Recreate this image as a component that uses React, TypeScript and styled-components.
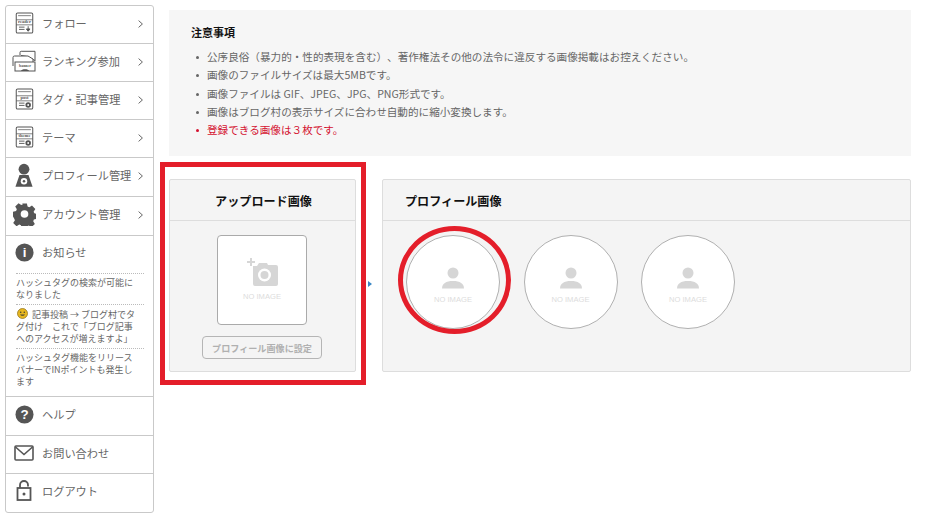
import React from "react";
import styled, { createGlobalStyle } from "styled-components";

const Global = createGlobalStyle`
  html, body { margin: 0; padding: 0; background: #fff; }
  body { font-family: "Noto Sans CJK JP", "Noto Sans", sans-serif; color: #555; width: 927px; height: 515px; overflow: hidden; text-spacing-trim: space-all; }
`;
const Page = styled.div`display: flex; align-items: flex-start; padding: 5px 0 0 5px; position: relative; width: 927px; height: 515px; box-sizing: border-box;`;
const Side = styled.nav`width: 149px; height: 508px; box-sizing: border-box; border: 1px solid #c9c9c9; border-radius: 3px; display: flex; flex-direction: column; flex: none;`;
const Row = styled.div<{ $h: number; $last?: boolean }>`
  height: ${p => p.$h}px; flex: none; box-sizing: border-box; display: flex; align-items: center; position: relative; padding-bottom: ${p => (p.$last ? 6 : 4)}px;
  border-bottom: ${p => (p.$last ? "none" : "1px solid #c9c9c9")};
`;
const IconSlot = styled.span`width: 36px; flex: none; display: flex; justify-content: center; align-items: center; height: 32px;`;
const Label = styled.span`font-size: 11.2px; color: #666; white-space: nowrap; line-height: 16px; flex: 1;`;
const Chev = styled.svg`flex: none; width: 5px; height: 8px; margin: 2px 10px 0 0; fill: none; stroke: #666; stroke-width: 1;`;
const NewsBox = styled.div`height: 161px; flex: none; box-sizing: border-box; border-bottom: 1px solid #c9c9c9; display: flex; flex-direction: column;`;
const NewsHead = styled.div`height: 37px; display: flex; align-items: center; flex: none; padding-bottom: 5px; box-sizing: border-box;`;
const NewsItem = styled.div`margin: 0 9px 0 10px; border-top: 1px dotted #bbb; font-size: 9px; line-height: 12px; color: #666; padding: 3px 4px 3px 0;`;
const Main = styled.main`margin-left: 15px; width: 742px; flex: none; padding-top: 5px;`;
const Notice = styled.section`background: #f6f6f6; height: 146px; box-sizing: border-box; padding: 13px 22px;`;
const NoticeTitle = styled.h2`margin: 0 0 7px; font-size: 11px; line-height: 18px; font-weight: 700; color: #111;`;
const NoticeList = styled.ul`margin: 0; padding: 0; list-style: none;`;
const NoticeItem = styled.li<{ $red?: boolean }>`
  font-size: 10.6px; line-height: 18.3px; color: ${p => (p.$red ? "#d4112f" : "#666")}; white-space: nowrap; padding-left: 16px; position: relative;
  &::before { content: ""; position: absolute; left: 5px; top: 8px; width: 3px; height: 3px; border-radius: 50%; background: ${p => (p.$red ? "#d4112f" : "#666")}; }
`;
const Panels = styled.div`display: flex; margin-top: 23px; align-items: stretch; height: 193px;`;
const Panel = styled.section<{ $w: number }>`width: ${p => p.$w}px; flex: none; box-sizing: border-box; background: #f4f4f4; border: 1px solid #ddd; border-radius: 2px; display: flex; flex-direction: column;`;
const PanelHead = styled.h3<{ $center?: boolean }>`
  margin: 0; height: 41px; flex: none; box-sizing: border-box; border-bottom: 1px solid #ddd; font-size: 12.1px; font-weight: 700; color: #111;
  display: flex; align-items: center; justify-content: ${p => (p.$center ? "center" : "flex-start")}; padding-left: ${p => (p.$center ? 2 : 22)}px;
`;
const UploadBody = styled.div`display: flex; flex-direction: column; align-items: center; padding: 14px 1px 0 0;`;
const UploadBox = styled.div`width: 90px; height: 90px; box-sizing: border-box; border: 1px solid #aaa; border-radius: 4px; background: #fff; display: flex; flex-direction: column; align-items: center; padding-top: 22px;`;
const NoImage = styled.span<{ $top: number }>`font-family: "Liberation Sans", sans-serif; font-size: 7.6px; line-height: 9px; color: #dcdcdc; margin-top: ${p => p.$top}px; font-weight: 400; white-space: nowrap;`;
const SetButton = styled.div`margin-top: 11px; width: 120px; height: 23px; box-sizing: border-box; border: 1px solid #b5b5b5; border-radius: 4px; font-size: 9.1px; font-weight: 700; color: #b0b0b0; display: flex; align-items: center; justify-content: center; white-space: nowrap;`;
const Arrow = styled.div`width: 26px; flex: none; display: flex; align-items: center; justify-content: center; padding: 17px 0 0 1px; box-sizing: border-box;`;
const Tri = styled.span`display: block; width: 0; height: 0; border-left: 4px solid #3b87c4; border-top: 3.5px solid transparent; border-bottom: 3.5px solid transparent;`;
const Circles = styled.div`display: flex; padding: 14px 0 0 23px; gap: 23.5px;`;
const Circle = styled.div`width: 94px; height: 94px; box-sizing: border-box; border: 1px solid #b0b0b0; border-radius: 50%; background: #fff; display: flex; flex-direction: column; align-items: center; padding-top: 31px;`;
const RedRect = styled.div`position: absolute; left: 160px; top: 162px; width: 206px; height: 223px; box-sizing: border-box; border: 5px solid #e41e2a; pointer-events: none;`;
const RedRing = styled.div`position: absolute; left: 398px; top: 226px; width: 113px; height: 108px; box-sizing: border-box; border: 5px solid #e41e2a; border-radius: 50%; pointer-events: none;`;
const SmileWrap = styled.span`display: inline-block; margin: 0 4px 0 1px; line-height: 0; vertical-align: -1px;`;

const G = "#555";

const DocIcon = ({ word, gear }: { word: string; gear: boolean }) => (
  <svg width="19" height="22" viewBox="0 0 20 24">
    <rect x="1" y="1" width="18" height="22" rx="1.5" fill="#fff" stroke={G} strokeWidth="1.1" />
    <path d="M3 4h14M1 8.5h18M1 14h18" stroke={G} strokeWidth=".8" fill="none" />
    <text x="10" y="12.500" fontSize="5" fontFamily="Liberation Serif, serif" fontWeight="700" textAnchor="middle" fill={G}>{word}</text>
    <path d="M4 16.5h6M4 19h6" stroke={G} strokeWidth="1" />
    {gear ? (
      <g><circle cx="14" cy="18.5" r="3" fill={G} /><circle cx="14" cy="18.5" r="1" fill="#fff" /></g>
    ) : (
      <path d="M14 15.5v5M12 18.5l2 2.5 2-2.5z" stroke={G} strokeWidth="1" fill={G} />
    )}
  </svg>
);
const BannerIcon = () => (
  <svg width="24" height="22" viewBox="0 0 24 22">
    <path d="M8 5V2.5A1.2 1.2 0 0 1 9.2 1.3H23V11M9 5.5l6 1 8 4" fill="none" stroke={G} strokeWidth="1" />
    <path d="M1 16V7.5A1.5 1.5 0 0 1 2.5 6H16l5 3v3" fill="#fff" stroke={G} strokeWidth="1" />
    <rect x="3" y="12" width="20" height="9" fill="#fff" stroke={G} strokeWidth="1" />
    <text x="13" y="17" fontSize="3.9" fontFamily="Liberation Serif, serif" fontWeight="700" textAnchor="middle" fill={G}>banner</text>
    <path d="M9 21c0-2.5 8-2.500 8 0z" fill={G} />
  </svg>
);
const PersonGear = () => (
  <svg width="18" height="25" viewBox="0 0 20 27">
    <circle cx="10" cy="6.5" r="6" fill={G} />
    <path d="M5 13h10l4.500 13H0.500z" fill={G} />
    <circle cx="10" cy="20" r="3.600" fill="#fff" />
    <circle cx="10" cy="20" r="1.400" fill={G} />
  </svg>
);
const Gear = () => (
  <svg width="23" height="23" viewBox="0 0 24 24">
    <path fill={G} fillRule="evenodd" d="M9.500 1h5l.7 3.200 1.800.8 2.800-1.800 3.500 3.500-1.800 2.800.8 1.800 2.700.7v5l-3.200.7-.7 1.800 1.700 2.800-3.500 3.500-2.800-1.800-1.800.8-.7 2.100h-5l-.7-3.200-1.800-.7-2.800 1.800-3.500-3.500 1.800-2.800-.8-1.800L0 14.500v-5l3.200-.7.800-1.800L2.300 4.200 5.800.700l2.800 1.800 1.800-.8zM12 8a4 4 0 1 0 0 8 4 4 0 0 0 0-8z" transform="translate(0 -.5)" />
  </svg>
);
const RoundGlyph = ({ ch }: { ch: string }) => (
  <svg width="19" height="19" viewBox="0 0 20 20">
    <circle cx="10" cy="10" r="9.500" fill={G} />
    <text x="10" y="15" fontSize="14" fontFamily="Liberation Sans, sans-serif" fontWeight="700" textAnchor="middle" fill="#fff">{ch}</text>
  </svg>
);
const Mail = () => (
  <svg width="20" height="16" viewBox="0 0 20 16">
    <rect x="1" y="1" width="18" height="14" rx="1" fill="#fff" stroke={G} strokeWidth="1.600" />
    <path d="M1.500 2l8.500 7.500 8.500-7.500" fill="none" stroke={G} strokeWidth="1.600" />
  </svg>
);
const Lock = () => (
  <svg width="16" height="21" viewBox="0 0 16 21">
    <path d="M4 8V5a4 4 0 0 1 8 0v1.500" fill="none" stroke={G} strokeWidth="1.800" />
    <rect x="1.500" y="8" width="13" height="12" fill="#fff" stroke={G} strokeWidth="1.800" />
    <circle cx="8" cy="14" r="1.500" fill={G} />
  </svg>
);
const Smile = () => (
  <SmileWrap>
    <svg width="11" height="11" viewBox="0 0 11 11">
      <circle cx="5.500" cy="5.500" r="5" fill="#e8b820" stroke="#8a6a10" strokeWidth=".7" />
      <circle cx="3.700" cy="4.300" r=".8" fill="#443" />
      <circle cx="7.300" cy="4.300" r=".8" fill="#443" />
      <path d="M3 6.500c1 1.800 4 1.800 5 0z" fill="#443" />
    </svg>
  </SmileWrap>
);
const CameraIcon = () => (
  <svg width="31" height="28" viewBox="0 0 31 28">
    <path d="M3 0h2v3h3v2H5v3H3V5H0V3h3z" fill="#d6d6d6" />
    <path d="M6 8h4l2-3h8l1 2h8a2 2 0 0 1 2 2v17a2 2 0 0 1-2 2H8a2 2 0 0 1-2-2z" fill="#d6d6d6" />
    <circle cx="17.500" cy="17" r="6.500" fill="#fff" />
    <circle cx="17.500" cy="17" r="4" fill="#d6d6d6" />
  </svg>
);
const PersonIcon = () => (
  <svg width="22" height="22" viewBox="0 0 22 22">
    <circle cx="11" cy="6" r="5.500" fill="#d6d6d6" />
    <path d="M0 21.500c0-5 4-7.500 11-7.500s11 2.500 11 7.500z" fill="#d6d6d6" />
  </svg>
);
const Chevron = () => (
  <Chev viewBox="0 0 5 8"><path d="M.6.6 4.400 4 .6 7.400" /></Chev>
);

const menuTop = [
  { h: 38, label: "フォロー", icon: <DocIcon word="reader" gear={false} /> },
  { h: 38, label: "ランキング参加", icon: <BannerIcon /> },
  { h: 38, label: "タグ・記事管理", icon: <DocIcon word="post" gear /> },
  { h: 38, label: "テーマ", icon: <DocIcon word="theme" gear /> },
  { h: 39, label: "プロフィール管理", icon: <PersonGear /> },
  { h: 39, label: "アカウント管理", icon: <Gear /> },
];
const notes = [
  "公序良俗（暴力的・性的表現を含む）、著作権法その他の法令に違反する画像掲載はお控えください。",
  "画像のファイルサイズは最大5MBです。",
  "画像ファイルは GIF、JPEG、JPG、PNG形式です。",
  "画像はブログ村の表示サイズに合わせ自動的に縮小変換します。",
];

export default function App() {
  return (
    <Page>
      <Global />
      <Side>
        {menuTop.map(m => (
          <Row key={m.label} $h={m.h}>
            <IconSlot>{m.icon}</IconSlot>
            <Label>{m.label}</Label>
            <Chevron />
          </Row>
        ))}
        <NewsBox>
          <NewsHead>
            <IconSlot><RoundGlyph ch="i" /></IconSlot>
            <Label>お知らせ</Label>
          </NewsHead>
          <NewsItem>ハッシュタグの検索が可能になりました</NewsItem>
          <NewsItem><Smile />記事投稿 → ブログ村でタグ付け　これで「ブログ記事へのアクセスが増えますよ」</NewsItem>
          <NewsItem>ハッシュタグ機能をリリース<br />バナーでINポイントも発生します</NewsItem>
        </NewsBox>
        <Row $h={39}><IconSlot><RoundGlyph ch="?" /></IconSlot><Label>ヘルプ</Label></Row>
        <Row $h={38}><IconSlot><Mail /></IconSlot><Label>お問い合わせ</Label></Row>
        <Row $h={39} $last><IconSlot><Lock /></IconSlot><Label>ログアウト</Label></Row>
      </Side>
      <Main>
        <Notice>
          <NoticeTitle>注意事項</NoticeTitle>
          <NoticeList>
            {notes.map(n => <NoticeItem key={n}>{n}</NoticeItem>)}
            <NoticeItem $red>登録できる画像は３枚です。</NoticeItem>
          </NoticeList>
        </Notice>
        <Panels>
          <Panel $w={187}>
            <PanelHead $center>アップロード画像</PanelHead>
            <UploadBody>
              <UploadBox>
                <CameraIcon />
                <NoImage $top={6}>NO IMAGE</NoImage>
              </UploadBox>
              <SetButton>プロフィール画像に設定</SetButton>
            </UploadBody>
          </Panel>
          <Arrow><Tri /></Arrow>
          <Panel $w={529}>
            <PanelHead>プロフィール画像</PanelHead>
            <Circles>
              {[0, 1, 2].map(i => (
                <Circle key={i}>
                  <PersonIcon />
                  <NoImage $top={6}>NO IMAGE</NoImage>
                </Circle>
              ))}
            </Circles>
          </Panel>
        </Panels>
      </Main>
      <RedRect />
      <RedRing />
    </Page>
  );
}
